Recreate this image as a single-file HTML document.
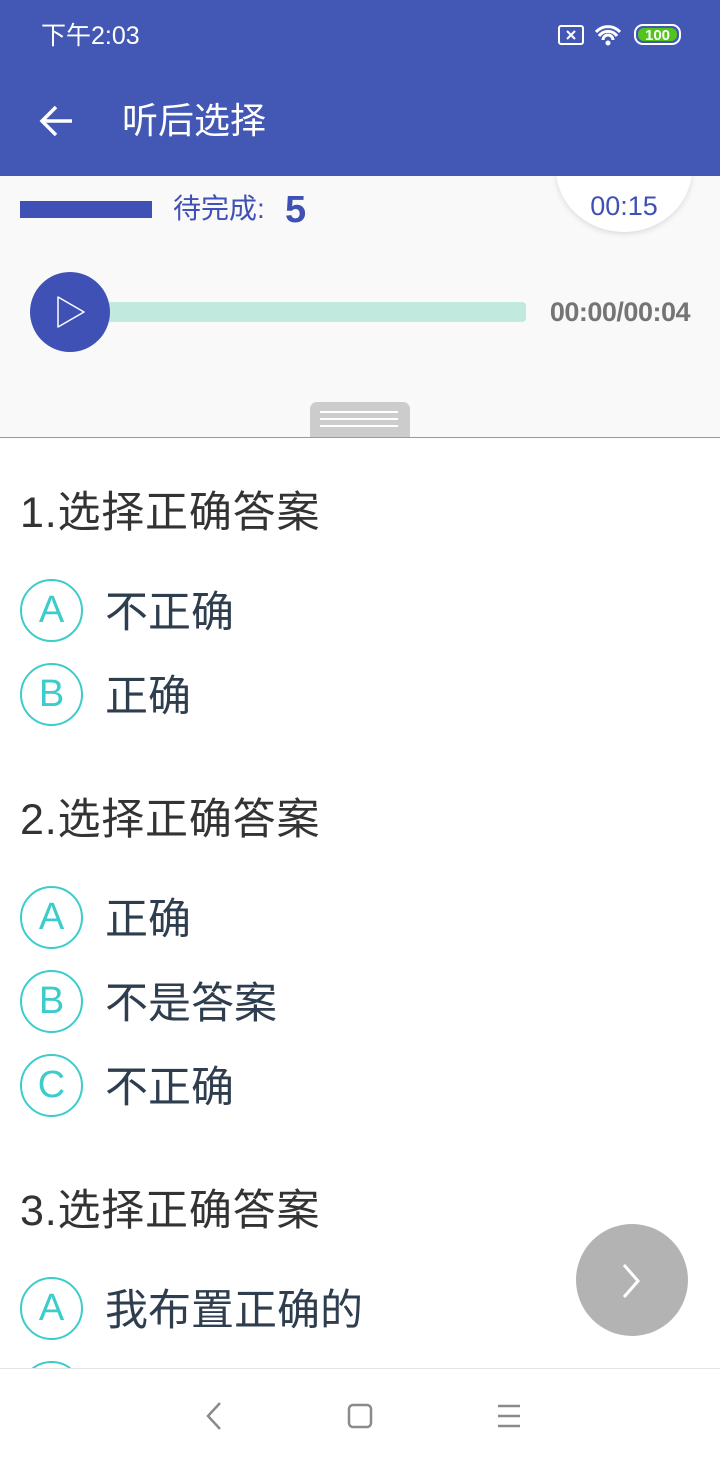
<!DOCTYPE html>
<html><head><meta charset="utf-8"><style>
*{margin:0;padding:0;box-sizing:border-box}
body{width:720px;height:1464px;overflow:hidden;background:#fff;font-family:"Liberation Sans","Noto Sans CJK SC",sans-serif;position:relative}
.abs{position:absolute}
.hdr{left:0;top:0;width:720px;height:176px;background:#4358b4}
.panel{left:0;top:176px;width:720px;height:262px;background:#f9f9f9;border-bottom:1px solid #9a9a9a;overflow:hidden}
.q{left:20px;font-size:43px;color:#333;line-height:44px;letter-spacing:0.8px}
.c{left:20px;width:63px;height:63px;border:2px solid #3ccccc;border-radius:50%;color:#3ccccc;font-size:38px;line-height:59px;text-align:center}
.t{left:105px;font-size:43px;color:#2f3e4e;line-height:44px}
</style></head><body>
<div class="abs hdr"></div>
<div class="abs" style="left:41px;top:20px;color:#fff;font-size:25px;line-height:32px">下午2:03</div>
<svg class="abs" style="left:556px;top:22px" width="130" height="26" viewBox="0 0 130 26">
<rect x="3" y="4" width="24" height="18" rx="2" fill="none" stroke="#fff" stroke-width="2"/>
<path d="M11 9l8 8M19 9l-8 8" stroke="#fff" stroke-width="2"/>
<path d="M40 10a16 16 0 0 1 24 0M43 14a11 11 0 0 1 18 0M47 18a5 5 0 0 1 10 0" stroke="#fff" stroke-width="3" fill="none"/>
<circle cx="52" cy="21" r="2.5" fill="#fff"/>
<rect x="79" y="3" width="45" height="19" rx="8" fill="none" stroke="#fff" stroke-width="2"/>
<rect x="82" y="6" width="39" height="13" rx="6" fill="#52c41a"/>
<text x="101.5" y="18" fill="#fff" font-size="15" font-weight="bold" text-anchor="middle" font-family="Liberation Sans">100</text>
</svg>
<svg class="abs" style="left:38px;top:103px" width="38" height="36" viewBox="0 0 38 36"><path d="M34 18H5M18 4L4 18l14 14" stroke="#fff" stroke-width="3.5" fill="none"/></svg>
<div class="abs" style="left:122px;top:100px;color:#fff;font-size:36px;line-height:42px">听后选择</div>
<div class="abs panel">
 <div class="abs" style="left:556px;top:-70px;width:136px;height:126px;border-radius:50%;background:#fff;box-shadow:0 2px 6px rgba(0,0,0,.12)"></div>
 <div class="abs" style="left:556px;top:14px;width:136px;text-align:center;color:#3f51b5;font-size:27px;line-height:32px">00:15</div>
 <div class="abs" style="left:20px;top:25px;width:132px;height:17px;background:#3f51b5"></div>
 <div class="abs" style="left:173px;top:17px;color:#3f51b5;font-size:28px;line-height:32px">待完成:</div>
 <div class="abs" style="left:285px;top:13px;color:#3f51b5;font-size:38px;font-weight:bold;line-height:42px">5</div>
 <div class="abs" style="left:100px;top:126px;width:426px;height:20px;background:#c2e9de;border-radius:4px"></div>
 <div class="abs" style="left:30px;top:96px;width:80px;height:80px;border-radius:50%;background:#3f51b5"></div>
 <svg class="abs" style="left:56px;top:118px" width="30" height="36" viewBox="0 0 30 36"><path d="M2 3v30l26-15z" fill="none" stroke="#fff" stroke-width="1.5" stroke-linejoin="round"/></svg>
 <div class="abs" style="left:520px;top:118px;width:170px;text-align:right;color:#757575;font-size:27px;font-weight:bold;line-height:36px;letter-spacing:-0.5px">00:00/00:04</div>
 <div class="abs" style="left:310px;top:226px;width:100px;height:40px;background:#ccc;border-radius:7px 7px 0 0"></div>
 <div class="abs" style="left:320px;top:235px;width:78px;height:2px;background:#fff"></div>
 <div class="abs" style="left:320px;top:242px;width:78px;height:2px;background:#fff"></div>
 <div class="abs" style="left:320px;top:249px;width:78px;height:2px;background:#fff"></div>
</div>

<div class="abs q" style="top:491px">1.选择正确答案</div>
<div class="abs c" style="top:579px">A</div><div class="abs t" style="top:591px">不正确</div>
<div class="abs c" style="top:663px">B</div><div class="abs t" style="top:675px">正确</div>
<div class="abs q" style="top:798px">2.选择正确答案</div>
<div class="abs c" style="top:886px">A</div><div class="abs t" style="top:898px">正确</div>
<div class="abs c" style="top:970px">B</div><div class="abs t" style="top:982px">不是答案</div>
<div class="abs c" style="top:1054px">C</div><div class="abs t" style="top:1066px">不正确</div>
<div class="abs q" style="top:1189px">3.选择正确答案</div>
<div class="abs c" style="top:1277px">A</div><div class="abs t" style="top:1289px">我布置正确的</div>
<div class="abs c" style="top:1361px"></div>

<div class="abs" style="left:576px;top:1224px;width:112px;height:112px;border-radius:50%;background:#b3b3b3"></div>
<svg class="abs" style="left:620px;top:1262px" width="24" height="38" viewBox="0 0 24 38"><path d="M4 3l14 16L4 35" stroke="#fff" stroke-width="3" fill="none"/></svg>

<div class="abs" style="left:0;top:1368px;width:720px;height:96px;background:#fff;border-top:1px solid #e3e3e3"></div>
<svg class="abs" style="left:200px;top:1400px" width="330" height="32" viewBox="0 0 330 32">
<path d="M20 3L8 16l12 13" stroke="#8a8a8a" stroke-width="2.5" fill="none"/>
<rect x="149" y="5" width="22" height="22" rx="4" fill="none" stroke="#8a8a8a" stroke-width="2.5"/>
<path d="M298 6h22M298 16h22M298 26h22" stroke="#8a8a8a" stroke-width="2.5"/>
</svg>
</body></html>
